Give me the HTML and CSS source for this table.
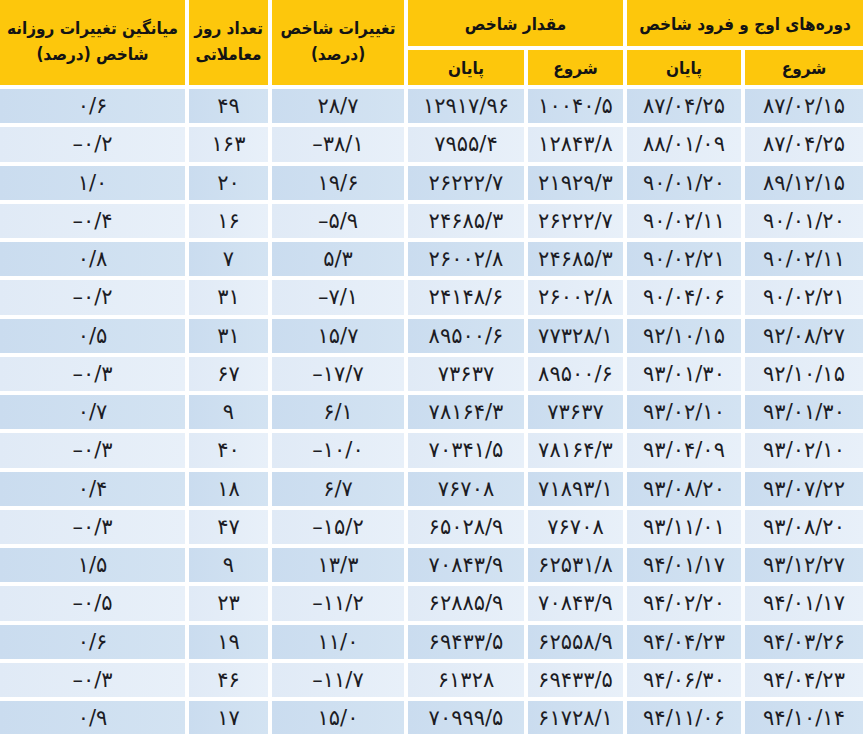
FILE: index.html
```html
<!DOCTYPE html>
<html lang="fa" dir="rtl">
<head>
<meta charset="utf-8">
<title>دوره‌های اوج و فرود شاخص</title>
<link rel="stylesheet" href="styles.css">
</head>
<body>
<div class="table">
  <div class="h span2c">دوره‌های اوج و فرود شاخص</div>
  <div class="h span2c">مقدار شاخص</div>
  <div class="h span2r">تغییرات شاخص<br>(درصد)</div>
  <div class="h span2r">تعداد روز<br>معاملاتی</div>
  <div class="h span2r">میانگین تغییرات روزانه<br>شاخص (درصد)</div>
  <div class="h sub">شروع</div>
  <div class="h sub">پایان</div>
  <div class="h sub">شروع</div>
  <div class="h sub">پایان</div>

  <div class="c o">۸۷/۰۲/۱۵</div><div class="c o">۸۷/۰۴/۲۵</div><div class="c o">۱۰۰۴۰/۵</div><div class="c o">۱۲۹۱۷/۹۶</div><div class="c o">۲۸/۷</div><div class="c o">۴۹</div><div class="c o">۰/۶</div>
  <div class="c e">۸۷/۰۴/۲۵</div><div class="c e">۸۸/۰۱/۰۹</div><div class="c e">۱۲۸۴۳/۸</div><div class="c e">۷۹۵۵/۴</div><div class="c e">–۳۸/۱</div><div class="c e">۱۶۳</div><div class="c e">–۰/۲</div>
  <div class="c o">۸۹/۱۲/۱۵</div><div class="c o">۹۰/۰۱/۲۰</div><div class="c o">۲۱۹۲۹/۳</div><div class="c o">۲۶۲۲۲/۷</div><div class="c o">۱۹/۶</div><div class="c o">۲۰</div><div class="c o">۱/۰</div>
  <div class="c e">۹۰/۰۱/۲۰</div><div class="c e">۹۰/۰۲/۱۱</div><div class="c e">۲۶۲۲۲/۷</div><div class="c e">۲۴۶۸۵/۳</div><div class="c e">–۵/۹</div><div class="c e">۱۶</div><div class="c e">–۰/۴</div>
  <div class="c o">۹۰/۰۲/۱۱</div><div class="c o">۹۰/۰۲/۲۱</div><div class="c o">۲۴۶۸۵/۳</div><div class="c o">۲۶۰۰۲/۸</div><div class="c o">۵/۳</div><div class="c o">۷</div><div class="c o">۰/۸</div>
  <div class="c e">۹۰/۰۲/۲۱</div><div class="c e">۹۰/۰۴/۰۶</div><div class="c e">۲۶۰۰۲/۸</div><div class="c e">۲۴۱۴۸/۶</div><div class="c e">–۷/۱</div><div class="c e">۳۱</div><div class="c e">–۰/۲</div>
  <div class="c o">۹۲/۰۸/۲۷</div><div class="c o">۹۲/۱۰/۱۵</div><div class="c o">۷۷۳۲۸/۱</div><div class="c o">۸۹۵۰۰/۶</div><div class="c o">۱۵/۷</div><div class="c o">۳۱</div><div class="c o">۰/۵</div>
  <div class="c e">۹۲/۱۰/۱۵</div><div class="c e">۹۳/۰۱/۳۰</div><div class="c e">۸۹۵۰۰/۶</div><div class="c e">۷۳۶۳۷</div><div class="c e">–۱۷/۷</div><div class="c e">۶۷</div><div class="c e">–۰/۳</div>
  <div class="c o">۹۳/۰۱/۳۰</div><div class="c o">۹۳/۰۲/۱۰</div><div class="c o">۷۳۶۳۷</div><div class="c o">۷۸۱۶۴/۳</div><div class="c o">۶/۱</div><div class="c o">۹</div><div class="c o">۰/۷</div>
  <div class="c e">۹۳/۰۲/۱۰</div><div class="c e">۹۳/۰۴/۰۹</div><div class="c e">۷۸۱۶۴/۳</div><div class="c e">۷۰۳۴۱/۵</div><div class="c e">–۱۰/۰</div><div class="c e">۴۰</div><div class="c e">–۰/۳</div>
  <div class="c o">۹۳/۰۷/۲۲</div><div class="c o">۹۳/۰۸/۲۰</div><div class="c o">۷۱۸۹۳/۱</div><div class="c o">۷۶۷۰۸</div><div class="c o">۶/۷</div><div class="c o">۱۸</div><div class="c o">۰/۴</div>
  <div class="c e">۹۳/۰۸/۲۰</div><div class="c e">۹۳/۱۱/۰۱</div><div class="c e">۷۶۷۰۸</div><div class="c e">۶۵۰۲۸/۹</div><div class="c e">–۱۵/۲</div><div class="c e">۴۷</div><div class="c e">–۰/۳</div>
  <div class="c o">۹۳/۱۲/۲۷</div><div class="c o">۹۴/۰۱/۱۷</div><div class="c o">۶۲۵۳۱/۸</div><div class="c o">۷۰۸۴۳/۹</div><div class="c o">۱۳/۳</div><div class="c o">۹</div><div class="c o">۱/۵</div>
  <div class="c e">۹۴/۰۱/۱۷</div><div class="c e">۹۴/۰۲/۲۰</div><div class="c e">۷۰۸۴۳/۹</div><div class="c e">۶۲۸۸۵/۹</div><div class="c e">–۱۱/۲</div><div class="c e">۲۳</div><div class="c e">–۰/۵</div>
  <div class="c o">۹۴/۰۳/۲۶</div><div class="c o">۹۴/۰۴/۲۳</div><div class="c o">۶۲۵۵۸/۹</div><div class="c o">۶۹۴۳۳/۵</div><div class="c o">۱۱/۰</div><div class="c o">۱۹</div><div class="c o">۰/۶</div>
  <div class="c e">۹۴/۰۴/۲۳</div><div class="c e">۹۴/۰۶/۳۰</div><div class="c e">۶۹۴۳۳/۵</div><div class="c e">۶۱۳۲۸</div><div class="c e">–۱۱/۷</div><div class="c e">۴۶</div><div class="c e">–۰/۳</div>
  <div class="c o">۹۴/۱۰/۱۴</div><div class="c o">۹۴/۱۱/۰۶</div><div class="c o">۶۱۷۲۸/۱</div><div class="c o">۷۰۹۹۹/۵</div><div class="c o">۱۵/۰</div><div class="c o">۱۷</div><div class="c o">۰/۹</div>
</div>
</body>
</html>
```
FILE: styles.css
```css
html, body {
  margin: 0;
  padding: 0;
  background: #ffffff;
}

body {
  font-family: "DejaVu Sans", "Noto Sans", sans-serif;
  color: #1c1c24;
  width: 863px;
  overflow: hidden;
}

.table {
  direction: rtl;
  display: grid;
  grid-template-columns: 118px 114px 95px 116px 132px 79px 185px;
  grid-template-rows: 46px 35px;
  grid-auto-rows: 34.25px;
  gap: 4px;
}

.h {
  background: #fdc70c;
  color: #141414;
  font-family: "DejaVu Sans Condensed", "DejaVu Sans", sans-serif;
  font-weight: bold;
  font-size: 17px;
  display: flex;
  align-items: center;
  justify-content: center;
  text-align: center;
  line-height: 1.5;
}

.span2c {
  grid-column: span 2;
  padding-top: 3px;
}

.span2r {
  grid-row: span 2;
  padding-bottom: 2px;
}

.sub {
  font-size: 17px;
  padding-top: 2px;
}

.c {
  direction: ltr;
  display: flex;
  align-items: center;
  justify-content: center;
  font-size: 21px;
  letter-spacing: 1.5px;
}

.o {
  background: linear-gradient(to right, #cadcef, #d3e3f2);
}

.e {
  background: linear-gradient(to right, #e0eaf6, #e8f0f9);
}
```
